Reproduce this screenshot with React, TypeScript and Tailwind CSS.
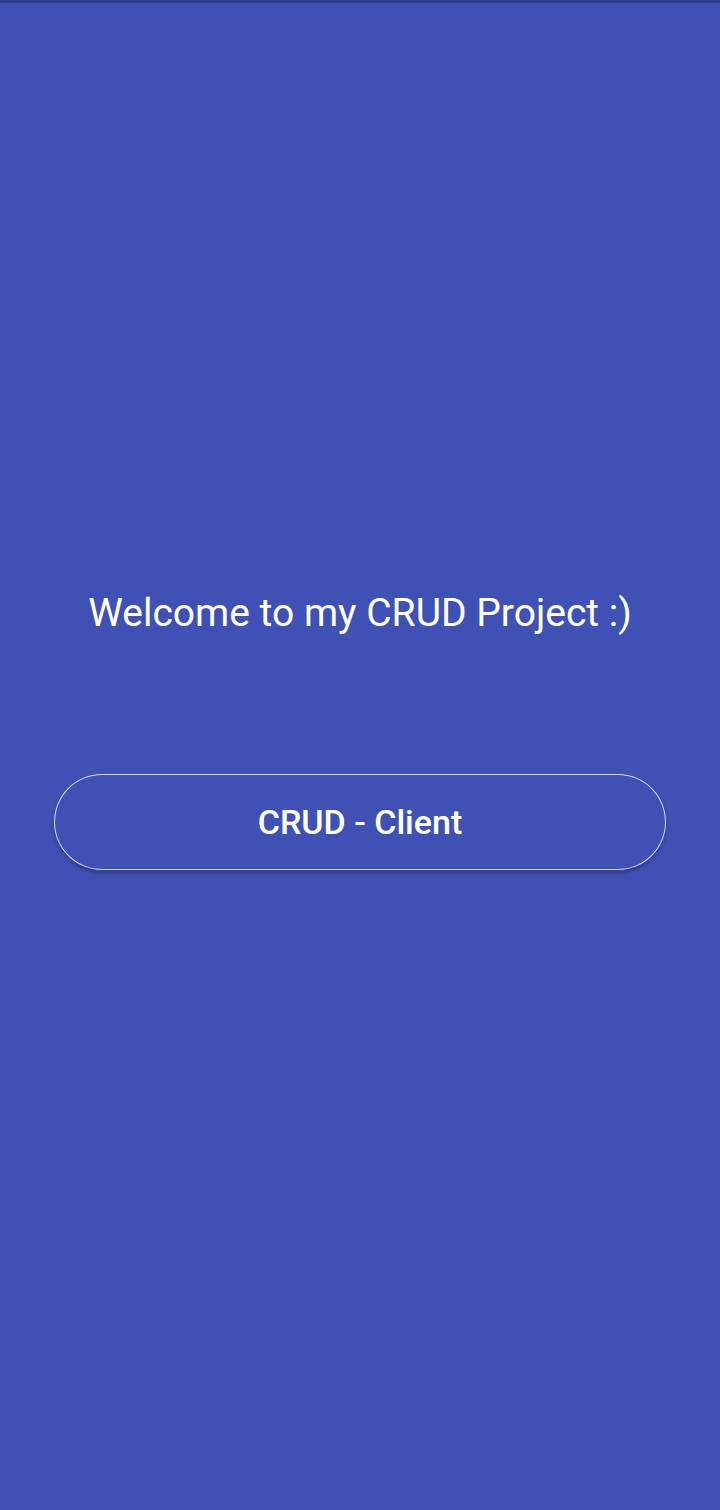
export default function App() {
  return (
    <div className="flex h-[1510px] w-full flex-col bg-[#3f51b5] font-['Roboto',sans-serif] text-white">
      {/* status strip */}
      <div className="h-[3px] w-full bg-[#2f3c8c]" />
      <div className="flex flex-1 flex-col items-center px-[54px] pt-[586px]">
        <h1 className="text-[39px] leading-[48px] font-normal tracking-normal">
          Welcome to my CRUD Project :)
        </h1>
        <button className="mt-[137px] flex h-[96px] w-full items-center justify-center rounded-full border border-white/80 bg-[#3f51b5] text-[34px] font-medium shadow-[0_3px_4px_rgba(0,0,0,0.25)]">
          CRUD - Client
        </button>
      </div>
    </div>
  );
}
